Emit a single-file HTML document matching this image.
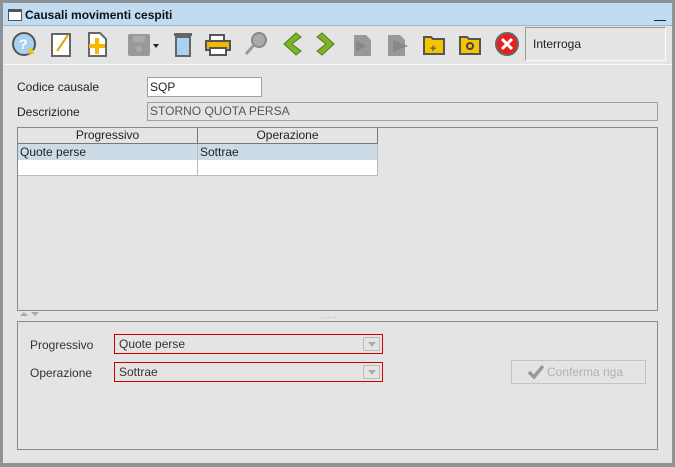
<!DOCTYPE html>
<html><head><style>
*{margin:0;padding:0;box-sizing:border-box}
body{width:675px;height:467px;background:#8e9398;font-family:"Liberation Sans",sans-serif;font-size:12px;color:#222;position:relative;overflow:hidden}
.a{position:absolute}
.win{left:3px;top:3px;width:669px;height:460px;background:#e4e4e4}
.title{left:3px;top:3px;width:669px;height:23px;background:#bfdcf3;border-bottom:1px solid #9fb7cc}
.inp{background:#fff;border:1px solid #a0a0a0;padding-left:2px;line-height:18px}
.ro{background:#e4e4e4;color:#555}
.combo{border:1px solid #cc0000;background:#e4e4e4;color:#333;padding-left:4px;line-height:19px}
.dd{position:absolute;right:2px;top:2px;width:17px;height:14px;border:1px solid #bbb}
.dd:after{content:"";position:absolute;left:4px;top:4px;border-left:4px solid transparent;border-right:4px solid transparent;border-top:5px solid #aaa}
</style></head><body>
<div class="a win"></div>
<div class="a title"></div>
<div class="a" style="left:8px;top:9px;width:14px;height:12px;border:1px solid #555;border-top:3px solid #555;background:#fff"></div>
<div class="a" style="left:25px;top:8px;font-size:12px;font-weight:bold;color:#111">Causali movimenti cespiti</div>
<div class="a" style="left:654px;top:20px;width:12px;height:1px;background:#222"></div>
<svg class="a" style="left:0;top:27px" width="525" height="34">
<circle cx="24" cy="17" r="11" fill="#a9d2f0" stroke="#555" stroke-width="2"/><text x="19" y="22" font-size="14" fill="#fff" font-weight="bold" font-family="Liberation Sans">?</text><polygon points="31,20 32,23 35,23 33,25 34,28 31,26 28,28 29,25 27,23 30,23" fill="#f5c400"/>
<rect x="52" y="7" width="18" height="22" fill="#fff" stroke="#666" stroke-width="2"/><line x1="57" y1="24" x2="68" y2="8" stroke="#e0a800" stroke-width="2"/>
<path d="M89 6h11l6 6v17h-17z" fill="#fff" stroke="#666" stroke-width="2"/><rect x="95" y="11" width="4" height="16" fill="#f5b800"/><rect x="89" y="17" width="16" height="4" fill="#f5b800"/>
<rect x="128" y="7" width="22" height="22" rx="2" fill="#999"/><rect x="133" y="9" width="12" height="6" fill="#aaa"/><circle cx="139" cy="22" r="3" fill="#aaa"/><polygon points="153,17 159,17 156,21" fill="#222"/>
<rect x="174" y="6" width="18" height="3" fill="#666"/><rect x="176" y="10" width="14" height="19" fill="#a9d2f0" stroke="#666" stroke-width="2"/>
<rect x="210" y="8" width="14" height="6" fill="#fff" stroke="#555" stroke-width="2"/><rect x="206" y="14" width="24" height="9" fill="#f5b800" stroke="#555" stroke-width="2"/><rect x="210" y="21" width="16" height="7" fill="#fff" stroke="#555" stroke-width="2"/>
<circle cx="259" cy="13" r="7" fill="#aaa" stroke="#888" stroke-width="2"/><line x1="254" y1="18" x2="246" y2="27" stroke="#999" stroke-width="3"/>
<polygon points="296,6 284,17 296,28 301,24 292,17 301,10" fill="#7cb32a" stroke="#4f7f15"/>
<polygon points="322,6 334,17 322,28 317,24 326,17 317,10" fill="#7cb32a" stroke="#4f7f15"/>
<path d="M354 8h12l5 5v16h-17z" fill="#999"/><polygon points="356,13 366,19 356,25" fill="#888"/>
<path d="M388 8h12l5 5v16h-17z" fill="#999"/><polygon points="393,13 408,19 393,25" fill="#888"/>
<path d="M424 10h7l2 2h11v15h-20z" fill="#f5c400" stroke="#555" stroke-width="2"/><text x="430" y="25" font-size="11" font-weight="bold" fill="#555">+</text>
<path d="M460 10h7l2 2h11v15h-20z" fill="#f5c400" stroke="#555" stroke-width="2"/><circle cx="470" cy="19" r="3" fill="none" stroke="#444" stroke-width="2"/>
<circle cx="507" cy="17" r="11" fill="#e82020" stroke="#666" stroke-width="2"/><path d="M502 12l10 10M512 12l-10 10" stroke="#fff" stroke-width="3"/>
</svg>
<div class="a" style="left:525px;top:27px;width:141px;height:34px;border:1px solid #999;border-right-color:#fff;border-bottom-color:#fff;background:#e4e4e4;padding:9px 0 0 7px">Interroga</div>
<div class="a" style="left:3px;top:64px;width:669px;height:1px;background:#fafafa"></div>
<div class="a" style="left:17px;top:80px">Codice causale</div>
<div class="a inp" style="left:147px;top:77px;width:115px;height:20px">SQP</div>
<div class="a" style="left:17px;top:105px">Descrizione</div>
<div class="a inp ro" style="left:147px;top:102px;width:511px;height:19px;line-height:17px">STORNO QUOTA PERSA</div>
<div class="a" style="left:17px;top:127px;width:641px;height:184px;border:1px solid #888;background:#e4e4e4"></div>
<div class="a" style="left:18px;top:128px;width:180px;height:16px;border-right:1px solid #777;border-bottom:1px solid #777;text-align:center;line-height:15px">Progressivo</div>
<div class="a" style="left:198px;top:128px;width:180px;height:16px;border-right:1px solid #777;border-bottom:1px solid #777;text-align:center;line-height:15px">Operazione</div>
<div class="a" style="left:18px;top:144px;width:360px;height:16px;background:#cddbe6"></div>
<div class="a" style="left:20px;top:145px">Quote perse</div>
<div class="a" style="left:200px;top:145px">Sottrae</div>
<div class="a" style="left:18px;top:160px;width:360px;height:16px;background:#fff;border-bottom:1px solid #bbb"></div>
<div class="a" style="left:197px;top:144px;width:1px;height:32px;background:#bbb"></div>
<div class="a" style="left:377px;top:144px;width:1px;height:32px;background:#bbb"></div>
<div class="a" style="left:20px;top:312px;width:0;height:0;border-left:4px solid transparent;border-right:4px solid transparent;border-bottom:4px solid #aaa"></div>
<div class="a" style="left:31px;top:312px;width:0;height:0;border-left:4px solid transparent;border-right:4px solid transparent;border-top:4px solid #aaa"></div>
<div class="a" style="left:321px;top:311px;font-size:8px;color:#999;letter-spacing:1px">.....</div>
<div class="a" style="left:17px;top:321px;width:641px;height:129px;border:1px solid #888"></div>
<div class="a" style="left:30px;top:338px;color:#333">Progressivo</div>
<div class="a combo" style="left:114px;top:334px;width:269px;height:20px">Quote perse<span class="dd"></span></div>
<div class="a" style="left:30px;top:366px;color:#333">Operazione</div>
<div class="a combo" style="left:114px;top:362px;width:269px;height:20px">Sottrae<span class="dd"></span></div>
<div class="a" style="left:511px;top:360px;width:135px;height:24px;border:1px solid #c4c4c4;color:#b0b0b0;line-height:22px;padding-left:35px">Conferma riga</div>
<svg class="a" style="left:528px;top:365px" width="16" height="14"><path d="M1 7l5 5 9-11" fill="none" stroke="#999" stroke-width="3.5"/></svg>
</body></html>
